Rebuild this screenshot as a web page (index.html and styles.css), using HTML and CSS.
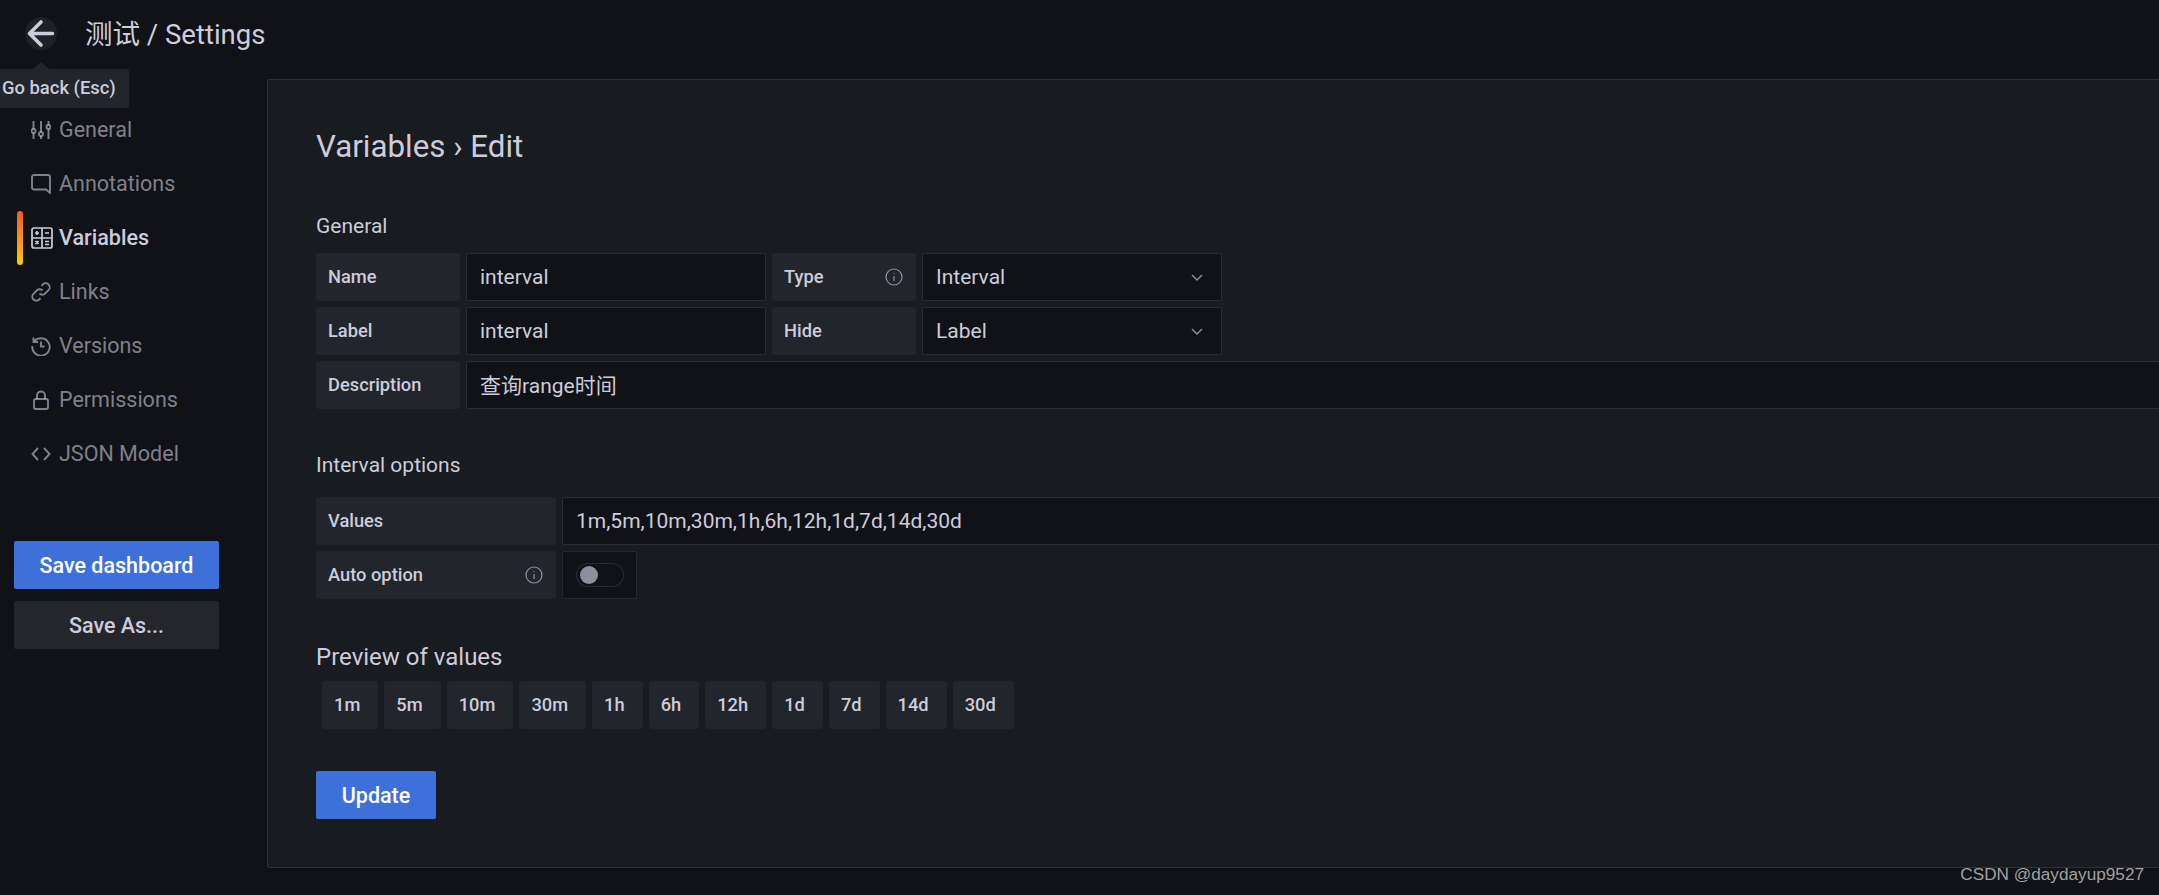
FILE: index.html
```html
<!DOCTYPE html>
<html lang="zh">
<head>
    <meta charset="UTF-8">
    <meta name="viewport" content="width=device-width, initial-scale=1.0">
    <title>测试 / Settings</title>
    <link rel="stylesheet" href="styles.css">
</head>
<body>
    <div class="topbar">
        <button class="back-button">
            <svg viewBox="0 0 32 32" class="back-icon"><path d="M27.500 16H5M16 4.500 4.500 16 16 27.500"/></svg>
        </button>
        <div class="page-title">测试 / Settings</div>
    </div>

    <div class="tooltip">Go back (Esc)</div>

    <div class="main">
        <div class="sidebar">
            <div class="nav-item">
                <svg viewBox="0 0 20 20" class="nav-icon"><path d="M2.500 1v8M2.500 13v6M10 1v11M10 16v3M17.500 1v4M17.500 9v10"/><circle cx="2.500" cy="11" r="2"/><circle cx="10" cy="14" r="2"/><circle cx="17.500" cy="7" r="2"/></svg>
                General
            </div>
            <div class="nav-item">
                <svg viewBox="0 0 20 20" class="nav-icon"><path d="M3 1h14a2 2 0 0 1 2 2v16l-4-3.500H3a2 2 0 0 1-2-2V3a2 2 0 0 1 2-2z"/></svg>
                Annotations
            </div>
            <div class="nav-item active">
                <svg viewBox="0 0 22 22" class="nav-icon calc-icon"><rect x="1" y="1" width="20" height="20" rx="2"/><path d="M11 1v20M1 11h20M4 6h4M6 4v4M14 6h4M4.500 14l3 3M7.500 14l-3 3M14 14.500h4M14 17.500h4"/></svg>
                Variables
            </div>
            <div class="nav-item">
                <svg viewBox="0 0 20 20" class="nav-icon"><path d="M8.500 11.500a4 4 0 0 0 5.700 0l3.300-3.300a4 4 0 0 0-5.700-5.700l-1.300 1.300M11.500 8.500a4 4 0 0 0-5.700 0l-3.300 3.300a4 4 0 0 0 5.700 5.700l1.300-1.300"/></svg>
                Links
            </div>
            <div class="nav-item">
                <svg viewBox="0 0 20 20" class="nav-icon"><path d="M2.500 1.500v4.500H7M2.800 6A8.700 8.700 0 1 1 1.300 10M10 5.500V10.500H13.500"/></svg>
                Versions
            </div>
            <div class="nav-item">
                <svg viewBox="0 0 20 20" class="nav-icon"><rect x="3" y="9" width="14" height="10" rx="2"/><path d="M6 9V5.500a4 4 0 0 1 8 0V9"/></svg>
                Permissions
            </div>
            <div class="nav-item">
                <svg viewBox="0 0 20 20" class="nav-icon"><path d="M7 4 1.500 10 7 16M13 4l5.500 6L13 16"/></svg>
                JSON Model
            </div>
            <button class="btn btn-primary save-btn">Save dashboard</button>
            <button class="btn btn-secondary">Save As...</button>
        </div>

        <div class="panel">
            <h2 class="panel-title">Variables › Edit</h2>

            <h5 class="section-title">General</h5>
            <div class="form-row">
                <div class="label">Name</div>
                <div class="input half">interval</div>
                <div class="label">Type
                    <svg viewBox="0 0 18 18" class="info-icon"><circle cx="9" cy="9" r="8"/><path d="M9 8v5M9 5v.8"/></svg>
                </div>
                <div class="input half select">Interval
                    <svg viewBox="0 0 16 16" class="chevron"><path d="M3 6l5 5 5-5"/></svg>
                </div>
            </div>
            <div class="form-row">
                <div class="label">Label</div>
                <div class="input half">interval</div>
                <div class="label">Hide</div>
                <div class="input half select">Label
                    <svg viewBox="0 0 16 16" class="chevron"><path d="M3 6l5 5 5-5"/></svg>
                </div>
            </div>
            <div class="form-row">
                <div class="label">Description</div>
                <div class="input wide cjk-input">查询range时间</div>
            </div>

            <h5 class="section-title second">Interval options</h5>
            <div class="form-row">
                <div class="label label-big">Values</div>
                <div class="input wide">1m,5m,10m,30m,1h,6h,12h,1d,7d,14d,30d</div>
            </div>
            <div class="form-row">
                <div class="label label-big">Auto option
                    <svg viewBox="0 0 18 18" class="info-icon"><circle cx="9" cy="9" r="8"/><path d="M9 8v5M9 5v.8"/></svg>
                </div>
                <div class="switch-box"><div class="switch"><div class="knob"></div></div></div>
            </div>

            <h4 class="preview-title">Preview of values</h4>
            <div class="tags">
                <div class="tag">1m</div>
                <div class="tag">5m</div>
                <div class="tag">10m</div>
                <div class="tag">30m</div>
                <div class="tag">1h</div>
                <div class="tag">6h</div>
                <div class="tag">12h</div>
                <div class="tag">1d</div>
                <div class="tag">7d</div>
                <div class="tag">14d</div>
                <div class="tag">30d</div>
            </div>

            <button class="btn btn-primary update-btn">Update</button>
        </div>
    </div>

    <div class="watermark">CSDN @daydayup9527</div>
</body>
</html>
```

FILE: styles.css
```css
body {
    font-family: Roboto, "Noto Sans CJK SC", sans-serif;
    margin: 0;
    height: 895px;
    overflow: hidden;
    background-color: #111217;
    color: #ccccdc;
    font-size: 21px;
}
svg {
    fill: none;
    stroke: currentColor;
    stroke-width: 1.9;
}
.topbar {
    height: 69px;
    display: flex;
    align-items: center;
    padding-left: 25px;
    box-sizing: border-box;
    padding-bottom: 2px;
}
.back-button {
    width: 32px;
    height: 33px;
    padding: 0;
    border: none;
    border-radius: 50%;
    background-color: #1f2127;
    color: #ccccdc;
    display: flex;
}
.back-icon {
    stroke-width: 3.6;
    stroke-linecap: round;
    stroke-linejoin: round;
}
.page-title {
    margin-left: 28px;
    margin-bottom: 4px;
    font-size: 27.5px;
}
.tooltip {
    position: absolute;
    left: 0;
    top: 69px;
    width: 129px;
    height: 39px;
    box-sizing: border-box;
    padding-left: 2px;
    background-color: #22252b;
    border-radius: 0 3px 3px 0;
    font-size: 18.4px;
    font-weight: 500;
    line-height: 38px;
}
.tooltip::before {
    content: "";
    position: absolute;
    left: 33px;
    top: -7px;
    border-left: 8px solid transparent;
    border-right: 8px solid transparent;
    border-bottom: 7px solid #22252b;
}
.main {
    display: flex;
    padding-top: 10px;
    padding-bottom: 28px;
}
.sidebar {
    width: 267px;
    flex-shrink: 0;
    box-sizing: border-box;
    padding: 24px 0 0 14px;
}
.nav-item {
    position: relative;
    height: 54px;
    box-sizing: border-box;
    padding-bottom: 1px;
    display: flex;
    align-items: center;
    gap: 8px;
    padding-left: 17px;
    font-size: 21.5px;
    color: rgba(204, 204, 220, 0.6);
}
.nav-item.active {
    color: #ccccdc;
    font-weight: 500;
    font-size: 21.6px;
}
.nav-item.active::before {
    content: "";
    position: absolute;
    left: 3px;
    top: 0;
    width: 6px;
    height: 54px;
    border-radius: 3px;
    background: linear-gradient(#f05a28, #fbca0a);
}
.nav-icon {
    width: 20px;
    height: 20px;
    flex-shrink: 0;
}
.calc-icon {
    width: 22px;
    height: 22px;
    margin-right: -2px;
    stroke-width: 1.7;
}
.btn {
    display: block;
    border: none;
    border-radius: 2px;
    font-family: inherit;
    font-size: 21.5px;
    font-weight: 500;
    height: 48px;
    padding: 0;
}
.btn-primary {
    background-color: #3d71d9;
    color: #fff;
}
.btn-secondary {
    background-color: #24262c;
    color: #ccccdc;
    width: 205px;
    margin-top: 12px;
}
.save-btn {
    width: 205px;
    margin-top: 60px;
}
.panel {
    flex: 1;
    height: 789px;
    box-sizing: border-box;
    margin-right: -40px;
    padding: 0 0 0 48px;
    background-color: #181b1f;
    border: 1px solid rgba(204, 204, 220, 0.12);
    border-radius: 3px;
}
.panel-title {
    margin: 48px 0 0;
    font-size: 31.3px;
    font-weight: 400;
    line-height: 38px;
}
.section-title {
    margin: 48px 0 14px;
    font-size: 21px;
    font-weight: 400;
    line-height: 25px;
}
.section-title.second {
    margin-top: 44px;
    margin-bottom: 19px;
}
.form-row {
    display: flex;
    gap: 6px;
    margin-bottom: 6px;
}
.label {
    width: 144px;
    height: 48px;
    box-sizing: border-box;
    padding: 0 13px 1px 12px;
    background-color: #22252b;
    border-radius: 3px;
    font-size: 18.3px;
    font-weight: 500;
    display: flex;
    align-items: center;
    justify-content: space-between;
}
.label-big {
    width: 240px;
}
.info-icon {
    width: 18px;
    height: 18px;
    color: rgba(204, 204, 220, 0.65);
    stroke-width: 1.2;
}
.input {
    height: 48px;
    box-sizing: border-box;
    padding: 0 13px;
    background-color: #111217;
    border: 1px solid rgba(204, 204, 220, 0.15);
    border-radius: 2px;
    display: flex;
    align-items: center;
}
.half {
    width: 300px;
}
.wide {
    flex: 1;
}
.cjk-input {
    padding-bottom: 2px;
}
.select {
    justify-content: space-between;
    padding-right: 16px;
}
.chevron {
    width: 16px;
    height: 16px;
    color: rgba(204, 204, 220, 0.65);
    stroke-width: 1.5;
}
.switch-box {
    width: 75px;
    height: 48px;
    box-sizing: border-box;
    background-color: #111217;
    border: 1px solid rgba(204, 204, 220, 0.12);
    border-radius: 2px;
    display: flex;
    align-items: center;
    padding-left: 13px;
}
.switch {
    width: 48px;
    height: 24px;
    box-sizing: border-box;
    border: 1px solid rgba(204, 204, 220, 0.15);
    border-radius: 12px;
    background-color: #111217;
    display: flex;
    align-items: center;
    padding-left: 3px;
}
.knob {
    width: 18px;
    height: 18px;
    border-radius: 50%;
    background-color: #8e8e9c;
}
.preview-title {
    margin: 44px 0 10px;
    font-size: 24px;
    font-weight: 400;
    line-height: 28px;
}
.tags {
    display: flex;
    gap: 6px;
    margin-left: 6px;
}
.tag {
    height: 48px;
    box-sizing: border-box;
    padding: 0 18px 0 12px;
    background-color: #22252b;
    border-radius: 3px;
    font-size: 18.3px;
    font-weight: 500;
    line-height: 48px;
}
.update-btn {
    width: 120px;
    margin-top: 42px;
}
.watermark {
    position: absolute;
    right: 15px;
    bottom: 10px;
    font-family: "Liberation Sans", Arial, sans-serif;
    font-size: 17.2px;
    color: #a0a0a0;
}
```
